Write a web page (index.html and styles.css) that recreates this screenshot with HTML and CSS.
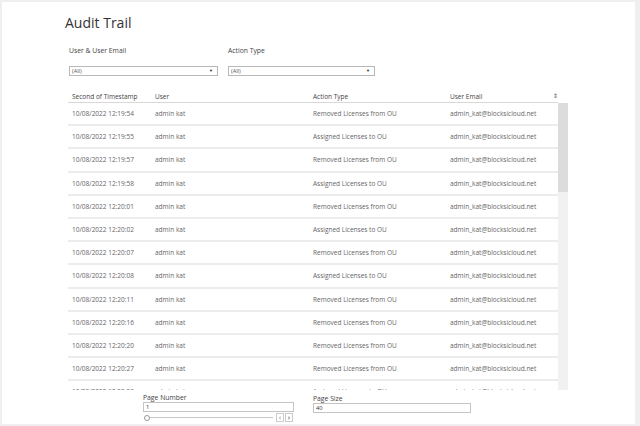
FILE: index.html
```html
<!DOCTYPE html>
<html>
<head>
<meta charset="utf-8">
<link rel="stylesheet" href="styles.css">
</head>
<body>
<div class="panel">
  <h1 class="title">Audit Trail</h1>
  <div class="filters">
    <div class="filter filter-user">
      <div class="filter-label">User &amp; User Email</div>
      <div class="select"><span>(All)</span><span class="caret">&#9660;</span></div>
    </div>
    <div class="filter filter-action">
      <div class="filter-label">Action Type</div>
      <div class="select"><span>(All)</span><span class="caret">&#9660;</span></div>
    </div>
  </div>
  <div class="table">
    <div class="thead">
      <div>Second of Timestamp</div>
      <div>User</div>
      <div>Action Type</div>
      <div class="th-last">User Email<span class="sort">&#8661;</span></div>
    </div>
    <div class="tbody-wrap">
      <div class="tbody">
        <div class="row"><div>10/08/2022 12:19:54</div><div>admin kat</div><div>Removed Licenses from OU</div><div>admin_kat@blocksicloud.net</div></div>
        <div class="row"><div>10/08/2022 12:19:55</div><div>admin kat</div><div>Assigned Licenses to OU</div><div>admin_kat@blocksicloud.net</div></div>
        <div class="row"><div>10/08/2022 12:19:57</div><div>admin kat</div><div>Removed Licenses from OU</div><div>admin_kat@blocksicloud.net</div></div>
        <div class="row"><div>10/08/2022 12:19:58</div><div>admin kat</div><div>Assigned Licenses to OU</div><div>admin_kat@blocksicloud.net</div></div>
        <div class="row"><div>10/08/2022 12:20:01</div><div>admin kat</div><div>Removed Licenses from OU</div><div>admin_kat@blocksicloud.net</div></div>
        <div class="row"><div>10/08/2022 12:20:02</div><div>admin kat</div><div>Assigned Licenses to OU</div><div>admin_kat@blocksicloud.net</div></div>
        <div class="row"><div>10/08/2022 12:20:07</div><div>admin kat</div><div>Removed Licenses from OU</div><div>admin_kat@blocksicloud.net</div></div>
        <div class="row"><div>10/08/2022 12:20:08</div><div>admin kat</div><div>Assigned Licenses to OU</div><div>admin_kat@blocksicloud.net</div></div>
        <div class="row"><div>10/08/2022 12:20:11</div><div>admin kat</div><div>Removed Licenses from OU</div><div>admin_kat@blocksicloud.net</div></div>
        <div class="row"><div>10/08/2022 12:20:16</div><div>admin kat</div><div>Removed Licenses from OU</div><div>admin_kat@blocksicloud.net</div></div>
        <div class="row"><div>10/08/2022 12:20:20</div><div>admin kat</div><div>Removed Licenses from OU</div><div>admin_kat@blocksicloud.net</div></div>
        <div class="row"><div>10/08/2022 12:20:27</div><div>admin kat</div><div>Removed Licenses from OU</div><div>admin_kat@blocksicloud.net</div></div>
        <div class="row"><div>10/08/2022 12:20:28</div><div>admin kat</div><div>Assigned Licenses to OU</div><div>admin_kat@blocksicloud.net</div></div>
      </div>
      <div class="scrollbar"><div class="thumb"></div></div>
    </div>
  </div>
  <div class="pager">
    <div class="pager-group page-number">
      <div class="pager-label">Page Number</div>
      <div class="input">1</div>
      <div class="slider-row">
        <div class="slider"><span class="knob"></span><span class="track"></span></div>
        <span class="btn">&lsaquo;</span><span class="btn">&rsaquo;</span>
      </div>
    </div>
    <div class="pager-group page-size">
      <div class="pager-label">Page Size</div>
      <div class="input">40</div>
    </div>
  </div>
</div>
</body>
</html>
```

FILE: styles.css
```css
* { box-sizing: border-box; }
html, body { margin: 0; padding: 0; }
body {
  background: #efefef;
  padding: 2px 5px 2px 2px;
  font-family: "Open Sans", "Liberation Sans", sans-serif;
  color: #666;
  height: 426px;
  overflow: hidden;
}
.panel {
  background: #fff;
  height: 422px;
  padding: 11px 0 0 63px;
  display: flex;
  flex-direction: column;
}
.title {
  margin: 0;
  font-size: 14px;
  font-weight: 400;
  color: #333;
  line-height: 20px;
}
.filters {
  display: flex;
  gap: 10px;
  margin-top: 14px;
  padding-left: 4px;
}
.filter-user { width: 149px; }
.filter-action { width: 147px; }
.filter-label {
  font-size: 6.8px;
  color: #444;
  line-height: 10px;
  height: 20px;
  margin-top: -1px;
}
.select {
  height: 10px;
  border: 1px solid #b8b8b8;
  font-size: 5.6px;
  line-height: 8px;
  color: #555;
  padding: 0 4px 0 2px;
  display: flex;
  justify-content: space-between;
  align-items: center;
}
.caret { font-size: 4px; color: #222; }
.table {
  margin-top: 14px;
  margin-left: 3px;
  width: 500px;
}
.thead, .row {
  display: grid;
  grid-template-columns: 83px 158px 137px 112px;
  padding-left: 4px;
  width: 490px;
}
.thead {
  font-size: 6.5px;
  color: #444;
  height: 13px;
  line-height: 13px;
  border-bottom: 1px solid #d8d8d8;
}
.th-last { display: flex; justify-content: space-between; padding-right: 4px; }
.sort { font-size: 6px; color: #555; }
.tbody-wrap {
  display: flex;
  height: 287px;
  overflow: hidden;
}
.tbody { width: 490px; overflow: hidden; }
.row {
  height: 23.2px;
  font-size: 6.5px;
  line-height: 21px;
  color: #666;
  border-bottom: 2px solid #ececec;
  white-space: nowrap;
}
.scrollbar {
  width: 10px;
  background: #f1f1f1;
  height: 287px;
  flex-shrink: 0;
}
.thumb {
  height: 89px;
  background: #dcdcdc;
}
.pager {
  display: flex;
  gap: 19px;
  padding-left: 78px;
  margin-top: 3px;
}
.pager-label {
  font-size: 6.8px;
  color: #444;
  line-height: 9px;
}
.page-number { width: 151px; }
.page-size { width: 158px; margin-top: 1px; }
.input {
  height: 10px;
  border: 1px solid #c4c4c4;
  font-size: 5.8px;
  line-height: 8px;
  color: #333;
  padding-left: 2px;
}
.slider-row {
  display: flex;
  align-items: center;
  gap: 1px;
  margin-top: 1px;
}
.slider {
  width: 132px;
  display: flex;
  align-items: center;
  padding-left: 1px;
}
.knob {
  width: 6px;
  height: 6px;
  border: 1px solid #999;
  border-radius: 50%;
  background: #fff;
}
.track {
  flex: 1;
  height: 1px;
  background: #c8c8c8;
  margin-right: 2px;
}
.btn {
  width: 8px;
  height: 9px;
  border: 1px solid #ccc;
  font-size: 8px;
  line-height: 6px;
  text-align: center;
  color: #888;
}
.btn + .btn { color: #333; }
```
